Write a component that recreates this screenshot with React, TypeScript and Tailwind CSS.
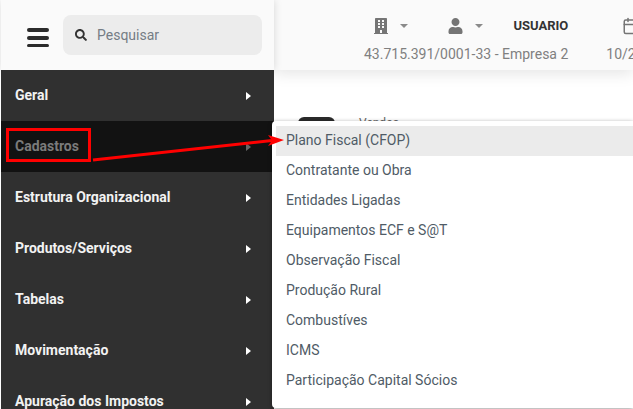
import { Calendar } from 'lucide-react';
import { FaBuilding, FaSearch, FaUser } from 'react-icons/fa';

const sideItems = [
  'Geral',
  'Cadastros',
  'Estrutura Organizacional',
  'Produtos/Serviços',
  'Tabelas',
  'Movimentação',
  'Apuração dos Impostos',
];

const subItems = [
  'Plano Fiscal (CFOP)',
  'Contratante ou Obra',
  'Entidades Ligadas',
  'Equipamentos ECF e S@T',
  'Observação Fiscal',
  'Produção Rural',
  'Combustíves',
  'ICMS',
  'Participação Capital Sócios',
];

function Caret() {
  return <span className="ml-[12px] h-0 w-0 border-x-[4px] border-t-[4px] border-x-transparent border-t-[#8a8a8a]" />;
}

export default function App() {
  return (
    <div className="relative flex h-[409px] w-[633px] overflow-hidden bg-white font-['Roboto',sans-serif]">
      <aside className="relative z-10 flex w-[274px] shrink-0 flex-col pl-px">
        <div className="flex h-[70px] shrink-0 items-center bg-[#fafafa] pl-[26px] pr-[12px] shadow-[0_0_8px_rgba(0,0,0,0.15)]">
          <div className="mt-[5px] flex w-[36px] shrink-0 flex-col gap-[4px]">
            <span className="h-[4px] w-[22px] rounded-full bg-[#2b2b2b]" />
            <span className="h-[4px] w-[22px] rounded-full bg-[#2b2b2b]" />
            <span className="h-[3px] w-[22px] rounded-full bg-[#2b2b2b]" />
          </div>
          <div className="flex h-[40px] flex-1 items-center rounded-[8px] bg-[#ececec] pl-[12px]">
            <FaSearch className="h-[12px] w-[12px] text-[#333333]" />
            <span className="ml-[10px] text-[14px] text-[#757d85]">Pesquisar</span>
          </div>
        </div>
        <nav className="flex min-h-0 flex-1 flex-col bg-[#303030]">
          {sideItems.map((item) => {
            const active = item === 'Cadastros';
            return (
              <div
                key={item}
                className={`flex h-[51px] shrink-0 items-center justify-between pl-[14px] pr-[23px] text-[14px] font-bold ${
                  active ? 'bg-[#121212] text-[#7b7b7b]' : 'text-[#f2f2f2]'
                }`}
              >
                <span>{item}</span>
                <span
                  className={`h-0 w-0 border-y-[4px] border-l-[5px] border-y-transparent ${
                    active ? 'border-l-[#666666]' : 'border-l-white'
                  }`}
                />
              </div>
            );
          })}
        </nav>
      </aside>

      <main className="flex min-w-0 flex-1 flex-col">
        <header className="flex h-[70px] shrink-0 justify-start bg-[#fafafa] pl-[90px] shadow-[0_4px_14px_rgba(0,0,0,0.10)]">
          <div className="flex shrink-0 flex-col items-end pt-[14px]">
            <div className="flex h-[24px] items-center">
              <FaBuilding className="h-[16px] w-[14px] text-[#757575]" />
              <Caret />
              <FaUser className="ml-[40px] h-[16px] w-[15px] text-[#757575]" />
              <Caret />
              <span className="ml-[30px] text-[13px] font-bold text-[#333333]">USUARIO</span>
            </div>
            <span className="mt-[6px] whitespace-nowrap text-[14px] text-[#808080]">43.715.391/0001-33 - Empresa 2</span>
          </div>
          <div className="ml-[38px] flex shrink-0 flex-col pt-[14px]">
            <div className="flex h-[24px] items-center pl-[16px]">
              <Calendar className="h-[18px] w-[18px] text-[#757575]" />
            </div>
            <span className="mt-[6px] whitespace-nowrap text-[14px] text-[#808080]">10/2023</span>
          </div>
        </header>
        <div className="flex items-start pl-[24px] pt-[47px]">
          <div className="h-[20px] w-[37px] rounded-t-[6px] bg-[#2b2b2b]" />
          <span className="ml-[24px] text-[12px] leading-[12px] text-[#666666]">Vendas ›</span>
        </div>
      </main>

      <div className="absolute left-[272px] top-[121px] z-20 h-[287px] w-[361px] rounded-l-[4px] bg-white pt-[5px] shadow-[0_1px_4px_rgba(0,0,0,0.4)]">
        {subItems.map((item, i) => (
          <div
            key={item}
            className={`flex h-[30px] items-center pb-[2px] text-[14px] text-[#4f5b66] ${
              i === 0 ? 'ml-[4px] bg-[#ebebeb] pl-[10px]' : 'pl-[14px]'
            }`}
          >
            {item}
          </div>
        ))}
      </div>

      <div className="absolute left-[6px] top-[128px] z-30 h-[34px] w-[85px] border-[3px] border-[#ff0000]" />
      <svg className="absolute left-[90px] top-[130px] z-30" width="200" height="35" viewBox="0 0 200 35">
        <line x1="3" y1="30" x2="182" y2="10.5" stroke="#ff0000" strokeWidth="3" />
        <polygon points="178,5 194,10 178,16 182,10.5" fill="#ff0000" />
      </svg>
    </div>
  );
}
